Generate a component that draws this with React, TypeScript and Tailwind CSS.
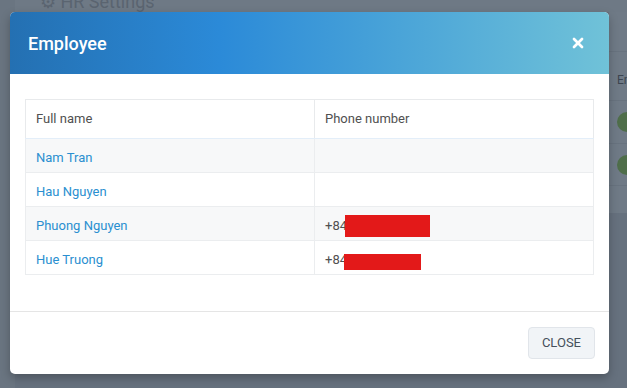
import { X } from 'lucide-react';

const employees = [
  { name: 'Nam Tran', phone: '', redact: 0 },
  { name: 'Hau Nguyen', phone: '', redact: 0 },
  { name: 'Phuong Nguyen', phone: '+84', redact: 1 },
  { name: 'Hue Truong', phone: '+84', redact: 2 },
];

export default function App() {
  return (
    <div className="relative w-[627px] h-[388px] overflow-hidden bg-[#66717e] font-['Roboto','Liberation_Sans',sans-serif]">
      {/* Page behind the backdrop */}
      <div className="flex h-full">
        <div className="w-[15px] bg-[#6a7581]" />
        <div className="flex-1 flex flex-col">
          <div className="h-[12px] bg-[#6e7985] pl-[25px] text-[18px] leading-[4px] text-[#5a6470] overflow-hidden whitespace-nowrap">
            ⚙ HR Settings
          </div>
          <div className="flex-1 flex justify-end">
            <div className="w-[18px] flex flex-col">
              <div className="bg-[#6f7a86] flex flex-col">
                <div className="h-[40px] border-b border-[#68737f]" />
                <div className="h-[48px] flex items-center pt-[8px] pl-[8px] text-[12px] text-[#3c4550] overflow-hidden whitespace-nowrap">Em</div>
                <div className="h-[43px] border-t border-[#68737f] flex items-center pl-[8px]">
                  <div className="w-[20px] h-[20px] shrink-0 rounded-full bg-[#4f6e4a]" />
                </div>
                <div className="h-[42px] border-t border-[#68737f] flex items-center pl-[8px]">
                  <div className="w-[20px] h-[20px] shrink-0 rounded-full bg-[#4f6e4a]" />
                </div>
                <div className="h-[28px] border-t border-[#68737f]" />
              </div>
              <div className="flex-1" />
            </div>
          </div>
        </div>
      </div>

      {/* Modal */}
      <div className="absolute left-[10px] top-[12px] w-[599px] h-[362px] bg-white rounded-[5px] shadow-[0_4px_10px_rgba(0,0,0,0.25)] overflow-hidden flex flex-col">
        <div className="h-[62px] flex items-center justify-between pl-[18px] pr-[23px] bg-[linear-gradient(90deg,#2470b2_0%,#2b8ad8_35%,#4aa4d8_65%,#70c2d8_100%)]">
          <span className="text-white text-[18px] font-medium">Employee</span>
          <X size={16} strokeWidth={4} className="text-white" />
        </div>

        <div className="px-[15px] pt-[25px] pb-[36px]">
          <table className="w-full border-collapse text-[13px]">
            <thead>
              <tr className="h-[39px] text-[#505050]">
                <th className="w-[289px] border border-[#e8eaec] border-b-[#e3eef9] text-left font-normal pl-[10px]">Full name</th>
                <th className="border border-[#e8eaec] border-b-[#e3eef9] text-left font-normal pl-[10px]">Phone number</th>
              </tr>
            </thead>
            <tbody>
              {employees.map((e, i) => (
                <tr key={e.name} className={`h-[34px] ${i % 2 === 0 ? 'bg-[#f7f8f9]' : 'bg-white'}`}>
                  <td className="border border-[#ebedef] pl-[10px] pt-[4px] text-[#2a8fd0]">{e.name}</td>
                  <td className="border border-[#ebedef] pl-[10px] pt-[4px] text-[#505050]">
                    <div className="flex items-center">
                      <span>{e.phone}</span>
                      {e.redact === 1 && <span className="-ml-[2px] w-[85px] h-[22px] bg-[#e31919]" />}
                      {e.redact === 2 && <span className="-ml-[3px] w-[77px] h-[16px] mt-[4px] bg-[#e31919]" />}
                    </div>
                  </td>
                </tr>
              ))}
            </tbody>
          </table>
        </div>

        <div className="flex-1 border-t border-[#e5e5e5] flex items-center justify-end pr-[14px]">
          <button className="h-[32px] px-[13px] bg-[#f1f4f7] border border-[#e1e5ea] rounded-[4px] text-[13px] text-[#45505c]">
            CLOSE
          </button>
        </div>
      </div>
    </div>
  );
}
